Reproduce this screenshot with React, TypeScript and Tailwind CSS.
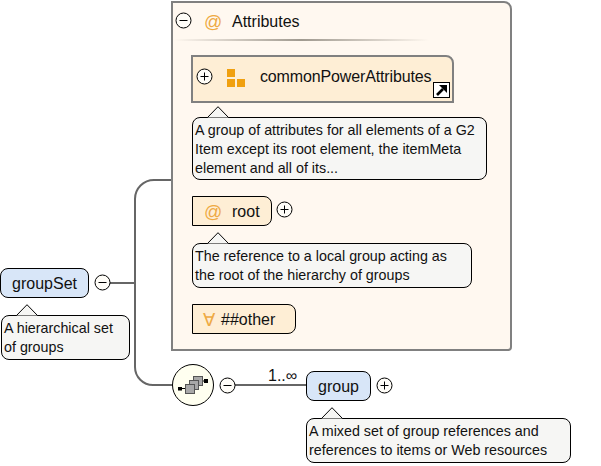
import type { ReactNode } from "react";

const nodeText = "text-[16px] leading-[20px] text-[#111]";
const attrBox = "flex rounded-r-[8px] border border-black bg-[#feeed5] pt-[5px]";
const elementBox = "flex h-[30px] items-center justify-center rounded-[8px] border border-black bg-[#d8e6f8] pt-px text-[16px] text-[#111]";

function Toggle({ open, className = "" }: { open: boolean; className?: string }) {
	return (
		<svg className={`shrink-0 ${className}`} width="17" height="17" viewBox="0 0 17 17">
			<circle cx="8.5" cy="8.5" r="7.5" fill="#fffdf8" stroke="#000" />
			<path d="M4.5 8.5h8" stroke="#000" />
			{!open && <path d="M8.5 4.5v8" stroke="#000" />}
		</svg>
	);
}

function Note({ className, children }: { className: string; children: ReactNode }) {
	return (
		<div className={`relative rounded-[8px] border border-black bg-[#f6f6f4] pl-[2px] pt-[3px] text-[14.3px] leading-[19px] text-[#111] ${className}`}>
			<svg className="absolute left-[14px] top-[-12px]" width="22" height="12" viewBox="0 0 22 12">
				<path d="M.5 11.500 11 .7 21.500 11.500" fill="#f6f6f4" stroke="#000" />
			</svg>
			{children}
		</div>
	);
}

function At() {
	return <span className="w-[28px] text-[18px] leading-[20px] text-[#eeaa44]">@</span>;
}

export default function App() {
	return (
		<div className="relative h-[466px] w-[601px] overflow-hidden bg-white font-['Liberation_Sans',Arial,sans-serif]">
			{/* connectors */}
			<svg className="absolute left-0 top-0" width="601" height="466" viewBox="0 0 601 466" fill="none">
				<path d="M110 283h25M172 180h-18a19 19 0 0 0-19 19v168a18 18 0 0 0 18 18h20" stroke="#666" strokeWidth="2" />
				<path d="M235 385h71" stroke="#666" strokeWidth="2" />
			</svg>

			{/* groupSet */}
			<div className="absolute left-0 top-[268px] flex flex-col items-start">
				<div className="flex items-start">
					<div className={`${elementBox} w-[89px]`}>groupSet</div>
					<Toggle open={true} className="ml-[5px] mt-[6px]" />
				</div>
				<Note className="ml-[1px] mt-[17px] h-[45px] w-[129px]">
					A hierarchical set
					<br />
					of groups
				</Note>
			</div>

			{/* attributes panel */}
			<div className="absolute left-[171px] top-[1px] flex h-[350px] w-[341px] flex-col items-start rounded-tr-[8px] rounded-br-[4px] border-2 border-[#808080] bg-[#fff8f0]">
				<div className="ml-[2px] mt-[9px] flex items-start">
					<Toggle open={true} />
					<span className="ml-[12px] flex">
						<At />
						<span className={nodeText}>Attributes</span>
					</span>
				</div>
				<div className="ml-[1px] mt-[7px] h-[2px] w-[255px] bg-gradient-to-r from-[#fff8f0] via-[#a09a90] to-[#fff8f0]" />

				<div className="relative ml-[18px] mt-[14px] flex h-[48px] w-[263px] items-start rounded-tr-[8px] border-2 border-[#808080] bg-[#feeed5] pl-[3px] pt-[11px]">
					<Toggle open={false} />
					<svg className="ml-[13px]" width="20" height="20" viewBox="0 0 20 20">
						<path d="M1 1h8v8H1zM1 11h8v8H1zM11 11h8v8h-8z" fill="#f0a010" />
					</svg>
					<span className={`${nodeText} -mt-px ml-[14px] tracking-[-0.14px]`}>commonPowerAttributes</span>
					<svg className="absolute bottom-[3px] right-[2px]" width="17" height="16" viewBox="0 0 17 16">
						<rect x=".5" y=".5" width="16" height="15" fill="#fff" stroke="#000" />
						<path d="M4 13 10 7" stroke="#000" strokeWidth="2.6" />
						<path d="M6 3h8v8z" fill="#000" />
					</svg>
				</div>
				<Note className="ml-[19px] mt-[14px] h-[63px] w-[295px]">
					A group of attributes for all elements of a G2
					<br />
					Item except its root element, the itemMeta
					<br />
					element and all of its...
				</Note>

				<div className="ml-[19px] mt-[16px] flex items-start">
					<div className={`${attrBox} h-[30px] w-[80px] pl-[11px]`}>
						<At />
						<span className={nodeText}>root</span>
					</div>
					<Toggle open={false} className="ml-[4px] mt-[5px]" />
				</div>
				<Note className="ml-[19px] mt-[17px] h-[45px] w-[280px]">
					The reference to a local group acting as
					<br />
					the root of the hierarchy of groups
				</Note>

				<div className={`${attrBox} ml-[19px] mt-[16px] h-[30px] w-[104px] pl-[10px]`}>
					<span className="w-[18px] text-[18px] leading-[20px] text-[#eeaa44]">∀</span>
					<span className={nodeText}>##other</span>
				</div>
			</div>

			{/* sequence compositor and group */}
			<div className="absolute left-[172px] top-[364px] flex items-start">
				<svg className="shrink-0" width="42" height="42" viewBox="0 0 42 42">
					<circle cx="21" cy="21" r="20.500" fill="#fffff0" stroke="#000" />
					<path d="M8 24.500h6M29 17h5" stroke="#000" />
					<path d="M6 23h4v3.500H6zM32 15h4v4h-4z" fill="#000" />
					<rect x="21.500" y="12.500" width="9" height="9" fill="#a8a8a8" stroke="#555" />
					<rect x="17.500" y="16.500" width="9" height="9" fill="#a8a8a8" stroke="#555" />
					<rect x="13.500" y="20.500" width="9" height="9" fill="#a8a8a8" stroke="#555" />
				</svg>
				<Toggle open={true} className="ml-[5px] mt-[13px]" />
				<div className="w-[70px] pl-[32px] pt-[3px] text-[16px] leading-[18px] text-[#111]">1..∞</div>
				<div className="mt-[7px] flex flex-col items-start">
					<div className="flex items-start">
						<div className={`${elementBox} w-[65px]`}>group</div>
						<Toggle open={false} className="ml-[5px] mt-[6px]" />
					</div>
					<Note className="mt-[17px] h-[45px] w-[265px]">
						A mixed set of group references and
						<br />
						references to items or Web resources
					</Note>
				</div>
			</div>
		</div>
	);
}
